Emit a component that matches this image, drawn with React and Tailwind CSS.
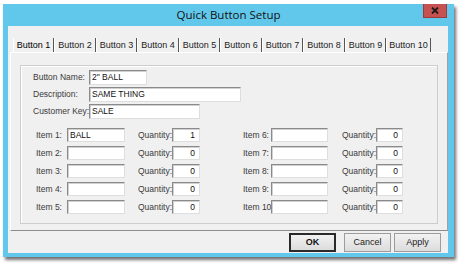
import React from 'react';

const font = { fontFamily: '"Liberation Sans", Arial, sans-serif' };

const Field = ({ value = '', width, align = 'left', h = 'h-[15px]' }) => (
  <div
    className={`${h} bg-white border border-t-[#8a8a8a] border-l-[#8a8a8a] border-r-[#dedede] border-b-[#dedede] shadow-[inset_1px_1px_0_#d0d0d0] flex items-center px-[2px] text-[8.5px] text-[#111] leading-none ${align === 'right' ? 'justify-end pr-[4px]' : ''}`}
    style={{ width }}
  >
    {value}
  </div>
);

const tabs = [
  ['Button 1', 'w-[41px]'],
  ['Button 2', 'w-[42px]'],
  ['Button 3', 'w-[41px]'],
  ['Button 4', 'w-[42px]'],
  ['Button 5', 'w-[41px]'],
  ['Button 6', 'w-[42px]'],
  ['Button 7', 'w-[41px]'],
  ['Button 8', 'w-[42px]'],
  ['Button 9', 'w-[41px]'],
  ['Button 10', 'w-[45px]'],
];

const items = [
  ['Item 1:', 'BALL', '1', 'Item 6:', '0'],
  ['Item 2:', '', '0', 'Item 7:', '0'],
  ['Item 3:', '', '0', 'Item 8:', '0'],
  ['Item 4:', '', '0', 'Item 9:', '0'],
  ['Item 5:', '', '0', 'Item 10:', '0'],
];

const Label = ({ children, w }) => (
  <div className={`${w} shrink-0 whitespace-nowrap text-[8.5px] text-[#3a3a3a] leading-none`}>{children}</div>
);

const WinButton = ({ children, primary }) => (
  <div
    className={`h-[19px] w-[47px] flex items-center justify-center text-[9px] leading-none bg-gradient-to-b from-[#f2f2f2] to-[#dcdcdc] ${
      primary ? 'border-2 border-[#2a2a2a] font-bold text-[#111]' : 'border border-[#9c9c9c] text-[#222]'
    }`}
  >
    {children}
  </div>
);

export default function App() {
  return (
    <div className="w-[464px] h-[270px] bg-white overflow-hidden pt-[4px] pl-[3px]" style={font}>
      <div className="w-[451px] h-[253px] bg-[#62c8eb] flex flex-col shadow-[2px_3px_3px_rgba(0,0,0,0.55)]">
        {/* title bar */}
        <div className="h-[22px] shrink-0 relative flex items-center justify-center">
          <span className="text-[11.5px] text-[#111]" style={{ fontFamily: '"Open Sans", "Liberation Sans", sans-serif' }}>
            Quick Button Setup
          </span>
          <div className="absolute right-[7px] top-0 w-[24px] h-[14px] bg-[#c75050] border border-[#9a3c3c] border-t-0 flex items-center justify-center">
            <svg width="8" height="7" viewBox="0 0 8 7">
              <path d="M1 0.5 L7 6.5 M7 0.5 L1 6.5" stroke="#1a1a1a" strokeWidth="1.8" />
            </svg>
          </div>
        </div>

        {/* client area */}
        <div className="ml-[5px] mr-[6px] h-[227px] bg-[#f0f0f0] flex flex-col">
          {/* tab strip */}
          <div className="mt-[12px] ml-[5px] h-[14px] flex">
            {tabs.map(([t, w], i) => (
              <div
                key={t}
                className={`${w} h-full flex items-center justify-center text-[9px] leading-none border-l border-l-white border-r border-r-[#555] ${
                  i === 0 ? 'text-[#000]' : 'text-[#222]'
                }`}
              >
                {t}
              </div>
            ))}
          </div>

          {/* tab panel */}
          <div className="ml-[2px] h-[179px] border border-t-white border-l-white border-r-[#a0a0a0] border-b-[#8c8c8c]">
            <div className="ml-[9px] mt-[12px] w-[418px] h-[159px] border border-[#cdcdcd] shadow-[inset_1px_1px_0_#ffffff]">
              <div className="pt-[4px] pl-[12px] flex flex-col gap-[2px]">
                <div className="flex items-center">
                  <Label w="w-[56px]">Button Name:</Label>
                  <Field value={'2" BALL'} width={58} />
                </div>
                <div className="flex items-center">
                  <Label w="w-[56px]">Description:</Label>
                  <Field value="SAME THING" width={152} />
                </div>
                <div className="flex items-center">
                  <Label w="w-[56px]">Customer Key:</Label>
                  <Field value="SALE" width={111} />
                </div>
              </div>

              <div className="mt-[9px] pl-[15px] flex flex-col gap-[4px]">
                {items.map(([l1, v1, q1, l2, q2]) => (
                  <div key={l1} className="flex items-center">
                    <Label w="w-[31px]">{l1}</Label>
                    <Field value={v1} width={58} h="h-[14px]" />
                    <div className="w-[13px]" />
                    <Label w="w-[34px]">Quantity:</Label>
                    <Field value={q1} width={28} h="h-[14px]" align="right" />
                    <div className="w-[43px]" />
                    <Label w="w-[28px]">{l2}</Label>
                    <Field width={57} h="h-[14px]" />
                    <div className="w-[14px]" />
                    <Label w="w-[34px]">Quantity:</Label>
                    <Field value={q2} width={27} h="h-[14px]" align="right" />
                  </div>
                ))}
              </div>
            </div>
          </div>

          {/* button row */}
          <div className="mt-[2px] flex justify-end gap-[8px] pr-[7px]">
            <WinButton primary>OK</WinButton>
            <div className="flex gap-[3px]">
              <WinButton>Cancel</WinButton>
              <WinButton>Apply</WinButton>
            </div>
          </div>
        </div>
      </div>
    </div>
  );
}
